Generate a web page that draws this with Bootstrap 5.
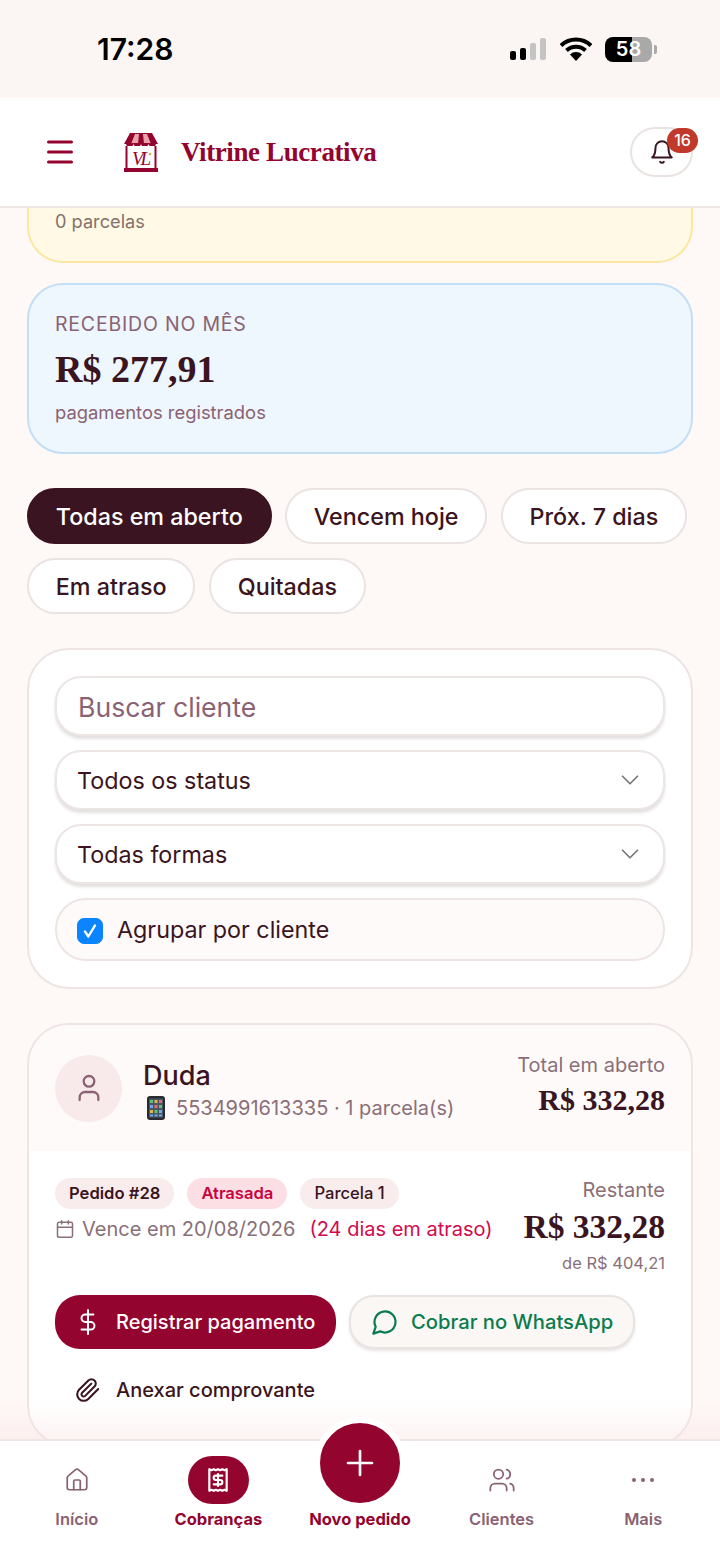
<!DOCTYPE html>
<html lang="pt-BR">
<head>
  <meta charset="UTF-8">
  <title>Vitrine Lucrativa - Cobranças</title>
  <meta name="viewport" content="width=device-width, initial-scale=1">
  <link href="https://cdn.jsdelivr.net/npm/bootstrap@5.3.0/dist/css/bootstrap.min.css" rel="stylesheet">
  <style>
    html, body {
      height: 1562px;
      margin: 0;
      overflow: hidden;
    }

    body {
      font-family: Inter, "Liberation Sans", sans-serif;
      color: #3a1420;
      background-color: #fef8f7;
    }

    .app-shell {
      height: 1562px;
    }

    .status-strip {
      height: 98px;
      background-color: #fbf6f4;
      padding: 0 63px 0 97px;
      color: #000;
    }

    .status-time {
      font-size: 30px;
      font-weight: 600;
      line-height: 1;
    }

    .status-signal {
      margin-right: 14px;
    }

    .status-wifi {
      margin-right: 13px;
    }

    .status-battery {
      width: 47px;
      height: 25px;
      border-radius: 8px;
      background: linear-gradient(90deg, #000 58%, #a9a9a9 58%);
      color: #fff;
      font-size: 20px;
      font-weight: 600;
      line-height: 25px;
      text-align: center;
    }

    .status-nub {
      width: 3px;
      height: 9px;
      margin-left: 2px;
      border-radius: 0 2px 2px 0;
      background-color: #a9a9a9;
    }

    .top-header {
      height: 110px;
      background-color: #fff;
      border-bottom: 2px solid #eee6e4;
      padding: 0 27px 0 47px;
      position: relative;
      z-index: 2;
    }

    .brand-name {
      font-family: "Liberation Serif", serif;
      font-size: 27px;
      font-weight: 700;
      color: #93042f;
      letter-spacing: -0.4px;
      margin-left: 22px;
    }

    .brand-logo {
      margin-left: 50px;
    }

    .bell-btn {
      width: 63px;
      height: 50px;
      border: 2px solid #e9e3e1;
      border-radius: 25px;
      background-color: #fff;
    }

    .bell-count {
      top: -4px;
      right: -7px;
      width: 31px;
      height: 25px;
      padding: 0;
      border-radius: 13px;
      background-color: #c0392b;
      font-size: 16px;
      font-weight: 500;
      line-height: 25px;
    }

    .page-body {
      flex: 1;
      min-height: 0;
      overflow: hidden;
      padding: 0 27px;
      position: relative;
      background-color: #fef8f7;
    }

    /* soft fade just above the tab bar */
    .page-body::after {
      content: "";
      position: absolute;
      left: 0;
      right: 0;
      bottom: 0;
      height: 40px;
      background: linear-gradient(180deg, rgba(251, 226, 226, 0), rgba(251, 226, 226, .4));
      pointer-events: none;
    }

    .due-card {
      height: 55px;
      padding-left: 26px;
      background-color: #fff9e5;
      border: 2px solid #fbe7a0;
      border-top: 0;
      border-radius: 0 0 36px 36px;
      color: #86716b;
      font-size: 18.2px;
      line-height: 26px;
    }

    .received-card {
      height: 171px;
      margin-top: 20px;
      padding: 26px 26px 0;
      background-color: #eef6fe;
      border: 2px solid #c3def7;
      border-radius: 36px;
    }

    .stat-label {
      color: #8a6273;
      font-size: 19.5px;
      line-height: 26px;
      letter-spacing: .8px;
    }

    .stat-value {
      font-family: "Liberation Serif", serif;
      font-size: 38px;
      font-weight: 700;
      line-height: 50px;
      color: #3a1420;
      margin-top: 7px;
    }

    .stat-note {
      color: #8a6273;
      font-size: 18.4px;
      line-height: 26px;
      margin-top: 5px;
    }

    .chip-wrap {
      margin-top: 34px;
      gap: 14px 13.5px;
    }

    .chip-btn {
      height: 56px;
      padding: 1px 26.8px 0;
      border: 2px solid #eae3e2;
      border-radius: 28px;
      background-color: #fff;
      color: #3a1420;
      font-size: 23.3px;
      font-weight: 500;
      line-height: 1;
    }

    .chip-btn.chip-on {
      background-color: #3a1420;
      border-color: #3a1420;
      color: #fff;
    }

    .filter-card {
      margin-top: 34px;
      height: 341px;
      padding: 26px;
      border: 2px solid #eee4e4;
      border-radius: 42px;
      background-color: #fff;
      gap: 14px;
    }

    .filter-input, .filter-input:focus {
      height: 60px;
      padding: 2px 21px 0;
      border: 2px solid #ebe5e4;
      border-radius: 26px;
      box-shadow: 0 3px 3px rgba(90, 60, 60, .16);
      color: #3a1420;
      font-size: 26.6px;
    }

    .filter-input::placeholder {
      color: #8a6273;
      opacity: 1;
    }

    .filter-select, .filter-select:focus {
      height: 60px;
      padding: 2px 50px 0 20px;
      border: 2px solid #ebe5e4;
      border-radius: 26px;
      box-shadow: 0 3px 3px rgba(90, 60, 60, .16);
      color: #3a1420;
      font-size: 23.3px;
      background-position: right 23px center;
      background-size: 20px 20px;
      background-image: url("data:image/svg+xml,%3csvg xmlns='http://www.w3.org/2000/svg' viewBox='0 0 16 16'%3e%3cpath fill='none' stroke='%23777' stroke-linecap='round' stroke-linejoin='round' stroke-width='1.4' d='m2 5 6 6 6-6'/%3e%3c/svg%3e");
    }

    .group-toggle {
      height: 63px;
      margin: 0;
      padding: 2px 20px 0;
      border: 2px solid #eee4e4;
      border-radius: 31px;
      background-color: #fefafa;
      font-size: 23.3px;
      gap: 14px;
    }

    .group-toggle .form-check-input {
      width: 26px;
      height: 26px;
      margin: 0;
      float: none;
      border-radius: 7px;
      background-color: #0a84ff;
      border-color: #0a84ff;
      background-size: 22px 22px;
      background-image: url("data:image/svg+xml,%3csvg xmlns='http://www.w3.org/2000/svg' viewBox='0 0 20 20'%3e%3cpath fill='none' stroke='%23fff' stroke-linecap='round' stroke-linejoin='round' stroke-width='2.2' d='m5.500 10.500 3 4.500 6-10'/%3e%3c/svg%3e");
    }

    .client-card {
      margin-top: 34px;
      height: 424px;
      flex-shrink: 0;
      border: 2px solid #eee4e4;
      border-radius: 42px;
      background-color: #fff;
      overflow: hidden;
    }

    .client-head {
      height: 126px;
      padding: 0 26px;
      background-color: #fefafa;
    }

    .client-avatar {
      width: 67px;
      height: 67px;
      border-radius: 50%;
      background-color: #f8e9eb;
      margin-right: 21px;
    }

    .client-info {
      padding-top: 5px;
    }

    .client-total {
      margin-bottom: 2px;
    }

    .client-name {
      font-size: 27px;
      font-weight: 500;
      line-height: 34px;
    }

    .client-meta {
      font-size: 20px;
      color: #8a6f78;
      line-height: 28px;
      margin-top: 1px;
    }

    .phone-ico {
      margin: 0 11px 0 4px;
    }

    .muted-right {
      color: #8a6f78;
      font-size: 20px;
      line-height: 26px;
    }

    .money-md {
      font-family: "Liberation Serif", serif;
      font-size: 30px;
      font-weight: 700;
      line-height: 44px;
    }

    .money-lg {
      font-family: "Liberation Serif", serif;
      font-size: 33.5px;
      font-weight: 700;
      line-height: 47px;
    }

    .charge-row {
      padding: 27px 26px 0;
    }

    .remain-col {
      margin-top: -1px;
    }

    .tag-wrap {
      gap: 13px;
    }

    .tag-pill {
      height: 31px;
      padding: 0 14px;
      border-radius: 16px;
      background-color: #f8eced;
      color: #3a1420;
      font-size: 16.6px;
      font-weight: 600;
      line-height: 31px;
    }

    .tag-late {
      background-color: #fcdfe4;
      color: #c8033f;
    }

    .tag-plain {
      font-weight: 500;
    }

    .due-line {
      font-size: 20px;
      color: #8a6f78;
      line-height: 28px;
      margin-top: 6px;
      white-space: nowrap;
    }

    .due-ico {
      margin-right: 7px;
    }

    .due-late {
      color: #d20a4e;
      margin-left: 14px;
    }

    .from-total {
      color: #8a6f78;
      font-size: 16.5px;
      line-height: 22px;
      margin-top: 2px;
    }

    .action-row {
      padding: 21px 26px 0;
      gap: 13px;
    }

    .pay-btn, .pay-btn:hover {
      height: 54px;
      width: 281px;
      padding: 0 20px;
      border: 0;
      border-radius: 25px;
      background-color: #93042f;
      color: #fff;
      font-size: 20px;
      font-weight: 500;
      gap: 15px;
      white-space: nowrap;
    }

    .wa-btn, .wa-btn:hover {
      height: 54px;
      width: 286px;
      padding: 0 20px;
      border: 2px solid #e9e3e1;
      border-radius: 25px;
      background-color: #faf7f4;
      box-shadow: 0 2px 3px rgba(90, 60, 60, .14);
      color: #0a7c4f;
      font-size: 20.2px;
      font-weight: 500;
      gap: 12px;
      white-space: nowrap;
    }

    .attach-btn, .attach-btn:hover {
      height: 54px;
      margin: 14px 0 0 26px;
      padding: 0 20px;
      border: 0;
      background: none;
      color: #3a1420;
      font-size: 20px;
      font-weight: 500;
      gap: 15px;
    }

    .bottom-bar {
      height: 123px;
      padding: 0 6px;
      background-color: #fff;
      border-top: 2px solid #eee6e4;
      position: relative;
      z-index: 2;
    }

    .bar-item {
      flex: 1 1 0;
      min-width: 0;
      padding-top: 15px;
      color: #8a6273;
      font-size: 16.5px;
      font-weight: 600;
      text-decoration: none;
    }

    .bar-item.bar-on {
      color: #93042f;
      font-weight: 700;
    }

    .bar-icon {
      width: 61px;
      height: 48px;
      border-radius: 24px;
      margin-bottom: 3px;
    }

    .bar-on .bar-icon {
      background-color: #93042f;
    }

    .bar-label {
      line-height: 24px;
    }

    .fab-btn {
      position: absolute;
      top: -24px;
      left: 50%;
      width: 92px;
      height: 92px;
      margin-left: -46px;
      border: 6px solid #fff;
      border-radius: 50%;
      background-color: #93042f;
    }

    .fab-btn:hover {
      background-color: #93042f;
      border-color: #fff;
    }

    .fab-space {
      height: 48px;
      margin-bottom: 3px;
    }

    svg.line-ico {
      fill: none;
      stroke: currentColor;
      stroke-linecap: round;
      stroke-linejoin: round;
      flex-shrink: 0;
    }
  </style>
</head>
<body>
  <div class="app-shell d-flex flex-column">

    <!-- STATUS BAR -->
    <div class="status-strip d-flex align-items-center justify-content-between">
      <div class="status-time">17:28</div>
      <div class="d-flex align-items-center">
        <svg width="36" height="23" viewBox="0 0 36 23" class="status-signal">
          <rect x="0" y="13" width="6" height="9" rx="2" fill="#000"/>
          <rect x="10" y="10" width="6" height="12" rx="2" fill="#000"/>
          <rect x="20" y="5" width="6" height="17" rx="2" fill="#c4c4c4"/>
          <rect x="30" y="0" width="6" height="22" rx="2" fill="#c4c4c4"/>
        </svg>
        <svg width="32" height="24" viewBox="0 0 32 24" class="status-wifi">
          <path d="M1 8.500a21.500 21.500 0 0 1 30 0" fill="none" stroke="#000" stroke-width="4"/>
          <path d="M6.500 13.500a14 14 0 0 1 19 0" fill="none" stroke="#000" stroke-width="4"/>
          <path d="M16 24l-6-6.500a8.500 8.500 0 0 1 12 0z" fill="#000"/>
        </svg>
        <div class="status-battery">58</div>
        <div class="status-nub"></div>
      </div>
    </div>

    <!-- HEADER -->
    <div class="top-header d-flex align-items-center">
      <svg width="26" height="24" viewBox="0 0 26 24" class="line-ico" style="color:#93042f" stroke-width="3">
        <path d="M1.500 2h23M1.500 12h23M1.500 22h23"/>
      </svg>
      <svg class="brand-logo" width="36" height="40" viewBox="0 0 36 40">
        <path d="M7 1h22l6 11H1z" fill="#93042f"/>
        <path d="M12 2h4l-1 10H8zM20 2h4l4 10h-7z" fill="#e8a3a8"/>
        <path d="M3 11a3.700 3.700 0 0 0 7.500 0 3.700 3.700 0 0 0 7.500 0 3.700 3.700 0 0 0 7.500 0 3.700 3.700 0 0 0 7.500 0" fill="#93042f"/>
        <path d="M3.500 14v23h29V14" fill="#fff" stroke="#93042f" stroke-width="2"/>
        <rect x="1" y="36" width="34" height="4" fill="#93042f"/>
        <text x="17" y="33" text-anchor="middle" font-family="Liberation Serif, serif" font-style="italic" font-size="19" letter-spacing="-3" fill="#93042f">VL</text>
        <circle cx="27" cy="22" r="1.300" fill="#e9a13b"/>
      </svg>
      <div class="brand-name">Vitrine Lucrativa</div>
      <button class="bell-btn btn position-relative d-flex align-items-center justify-content-center ms-auto p-0" type="button">
        <svg width="26" height="26" viewBox="0 0 24 24" class="line-ico" stroke-width="1.8" style="color:#3a1420">
          <path d="M6 8a6 6 0 0 1 12 0c0 7 3 9 3 9H3s3-2 3-9"/>
          <path d="M10.300 21a1.940 1.940 0 0 0 3.400 0"/>
        </svg>
        <span class="badge bell-count position-absolute">16</span>
      </button>
    </div>

    <!-- CONTENT -->
    <div class="page-body d-flex flex-column">
      <div class="due-card flex-shrink-0">0 parcelas</div>

      <div class="received-card flex-shrink-0">
        <div class="stat-label">RECEBIDO NO MÊS</div>
        <div class="stat-value">R$ 277,91</div>
        <div class="stat-note">pagamentos registrados</div>
      </div>

      <div class="chip-wrap d-flex flex-wrap flex-shrink-0">
        <button class="chip-btn chip-on btn" type="button">Todas em aberto</button>
        <button class="chip-btn btn" type="button">Vencem hoje</button>
        <button class="chip-btn btn" type="button">Próx. 7 dias</button>
        <button class="chip-btn btn" type="button">Em atraso</button>
        <button class="chip-btn btn" type="button">Quitadas</button>
      </div>

      <div class="filter-card d-flex flex-column flex-shrink-0">
        <input class="filter-input form-control" type="text" placeholder="Buscar cliente">
        <select class="filter-select form-select"><option>Todos os status</option></select>
        <select class="filter-select form-select"><option>Todas formas</option></select>
        <label class="group-toggle form-check d-flex align-items-center">
          <input class="form-check-input" type="checkbox" checked>
          <span>Agrupar por cliente</span>
        </label>
      </div>

      <div class="client-card">
        <div class="client-head d-flex align-items-center">
          <div class="client-avatar d-flex align-items-center justify-content-center flex-shrink-0">
            <svg width="32" height="32" viewBox="0 0 24 24" class="line-ico" stroke-width="1.7" style="color:#8a6273">
              <path d="M19 21v-2a4 4 0 0 0-4-4H9a4 4 0 0 0-4 4v2"/>
              <circle cx="12" cy="7" r="4"/>
            </svg>
          </div>
          <div class="client-info flex-grow-1">
            <div class="client-name">Duda</div>
            <div class="client-meta d-flex align-items-center">
              <svg class="phone-ico flex-shrink-0" width="18" height="24" viewBox="0 0 18 24">
                <rect x="0" y="0" width="18" height="24" rx="3" fill="#2b2b2f"/>
                <rect x="2" y="2.500" width="14" height="19" fill="#4a5563"/>
                <path d="M3 4h3v3H3zM12 9h3v3h-3zM7.500 14h3v3h-3z" fill="#5ec27a"/>
                <path d="M7.500 4h3v3h-3zM3 14h3v3H3z" fill="#e8b24a"/>
                <path d="M12 4h3v3h-3zM7.500 9h3v3h-3z" fill="#e46a6a"/>
                <path d="M3 9h3v3H3zM12 14h3v3h-3zM3 18.500h3v2H3zM7.500 18.500h3v2h-3zM12 18.500h3v2h-3z" fill="#6fa8e8"/>
              </svg>
              <span>5534991613335 · 1 parcela(s)</span>
            </div>
          </div>
          <div class="client-total text-end">
            <div class="muted-right">Total em aberto</div>
            <div class="money-md">R$ 332,28</div>
          </div>
        </div>

        <div class="charge-row d-flex justify-content-between">
          <div>
            <div class="tag-wrap d-flex">
              <span class="tag-pill">Pedido #28</span>
              <span class="tag-pill tag-late">Atrasada</span>
              <span class="tag-pill tag-plain">Parcela 1</span>
            </div>
            <div class="due-line d-flex align-items-center">
              <svg width="20" height="20" viewBox="0 0 24 24" class="line-ico due-ico" stroke-width="1.8">
                <rect x="3" y="4" width="18" height="18" rx="2"/>
                <path d="M16 2v4M8 2v4M3 10h18"/>
              </svg>
              <span>Vence em 20/08/2026</span>
              <span class="due-late">(24 dias em atraso)</span>
            </div>
          </div>
          <div class="remain-col text-end">
            <div class="muted-right">Restante</div>
            <div class="money-lg">R$ 332,28</div>
            <div class="from-total">de R$ 404,21</div>
          </div>
        </div>

        <div class="action-row d-flex">
          <button class="pay-btn btn d-flex align-items-center" type="button">
            <svg width="26" height="26" viewBox="0 0 24 24" class="line-ico" stroke-width="1.8">
              <path d="M12 1v22M17 5H9.500a3.500 3.500 0 0 0 0 7h5a3.500 3.500 0 0 1 0 7H6"/>
            </svg>
            <span>Registrar pagamento</span>
          </button>
          <button class="wa-btn btn d-flex align-items-center" type="button">
            <svg width="28" height="28" viewBox="0 0 24 24" class="line-ico" stroke-width="1.9">
              <path d="M7.900 20A9 9 0 1 0 4 16.100L2 22Z"/>
            </svg>
            <span>Cobrar no WhatsApp</span>
          </button>
        </div>
        <button class="attach-btn btn d-inline-flex align-items-center" type="button">
          <svg width="26" height="26" viewBox="0 0 24 24" class="line-ico" stroke-width="1.9">
            <path d="m21.440 11.050-9.190 9.190a6 6 0 0 1-8.490-8.490l8.570-8.570A4 4 0 1 1 18 8.840l-8.590 8.570a2 2 0 0 1-2.830-2.830l8.490-8.480"/>
          </svg>
          <span>Anexar comprovante</span>
        </button>
      </div>
    </div>

    <!-- BOTTOM NAV -->
    <nav class="bottom-bar d-flex flex-shrink-0">
      <a class="bar-item d-flex flex-column align-items-center" href="#">
        <span class="bar-icon d-flex align-items-center justify-content-center">
          <svg width="26" height="26" viewBox="0 0 24 24" class="line-ico" stroke-width="1.6">
            <path d="M3 10a2 2 0 0 1 .709-1.528l7-6a2 2 0 0 1 2.582 0l7 6A2 2 0 0 1 21 10v9a2 2 0 0 1-2 2H5a2 2 0 0 1-2-2z"/>
            <path d="M15 21v-8a1 1 0 0 0-1-1h-4a1 1 0 0 0-1 1v8"/>
          </svg>
        </span>
        <span class="bar-label">Início</span>
      </a>
      <a class="bar-item bar-on d-flex flex-column align-items-center" href="#">
        <span class="bar-icon d-flex align-items-center justify-content-center text-white">
          <svg width="26" height="26" viewBox="0 0 24 24" class="line-ico" stroke-width="2">
            <path d="M4 2v20l2-1 2 1 2-1 2 1 2-1 2 1 2-1 2 1V2l-2 1-2-1-2 1-2-1-2 1-2-1-2 1Z"/>
            <path d="M16 8h-6a2 2 0 1 0 0 4h4a2 2 0 1 1 0 4H8"/>
            <path d="M12 17.500v-11"/>
          </svg>
        </span>
        <span class="bar-label">Cobranças</span>
      </a>
      <a class="bar-item bar-on d-flex flex-column align-items-center" href="#">
        <span class="fab-space"></span>
        <span class="bar-label">Novo pedido</span>
      </a>
      <a class="bar-item d-flex flex-column align-items-center" href="#">
        <span class="bar-icon d-flex align-items-center justify-content-center">
          <svg width="28" height="28" viewBox="0 0 24 24" class="line-ico" stroke-width="1.5">
            <path d="M16 21v-2a4 4 0 0 0-4-4H6a4 4 0 0 0-4 4v2"/>
            <circle cx="9" cy="7" r="4"/>
            <path d="M22 21v-2a4 4 0 0 0-3-3.870M16 3.130a4 4 0 0 1 0 7.750"/>
          </svg>
        </span>
        <span class="bar-label">Clientes</span>
      </a>
      <a class="bar-item d-flex flex-column align-items-center" href="#">
        <span class="bar-icon d-flex align-items-center justify-content-center">
          <svg width="26" height="26" viewBox="0 0 26 26" fill="currentColor">
            <circle cx="4" cy="13" r="2"/>
            <circle cx="13" cy="13" r="2"/>
            <circle cx="22" cy="13" r="2"/>
          </svg>
        </span>
        <span class="bar-label">Mais</span>
      </a>
      <button class="fab-btn btn d-flex align-items-center justify-content-center p-0" type="button">
        <svg width="32" height="32" viewBox="0 0 24 24" class="line-ico text-white" stroke-width="2">
          <path d="M12 3v18M3 12h18"/>
        </svg>
      </button>
    </nav>
  </div>

  <script src="https://cdn.jsdelivr.net/npm/bootstrap@5.3.0/dist/js/bootstrap.bundle.min.js"></script>
</body>
</html>
